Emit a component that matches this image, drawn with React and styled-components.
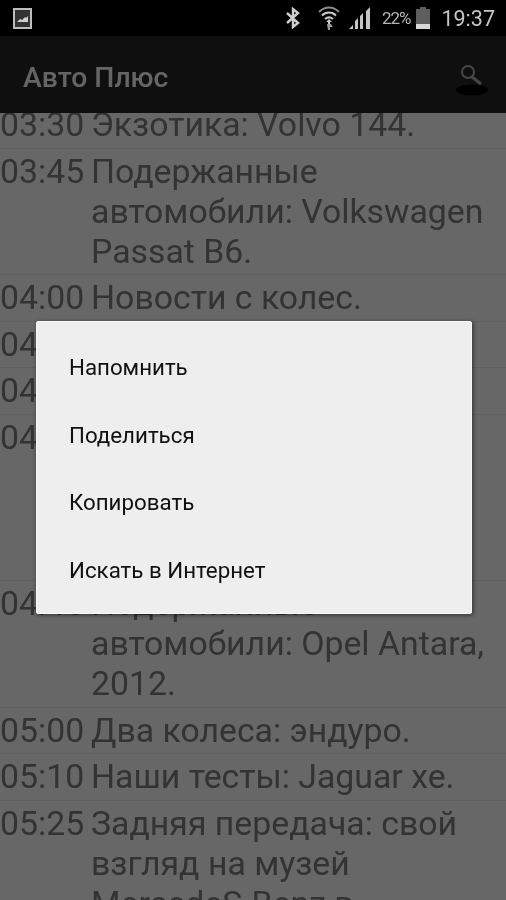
import React from "react";
import styled, { createGlobalStyle } from "styled-components";

const Global = createGlobalStyle`
  html, body { margin: 0; padding: 0; background: #000; }
  body { font-family: Roboto, "Noto Sans", sans-serif; }
`;

const Phone = styled.div`
  position: relative;
  width: 506px;
  height: 900px;
  overflow: hidden;
  display: flex;
  flex-direction: column;
  background: #f5f5f5;
  filter: blur(0.4px);
`;

const StatusBar = styled.div`
  flex: none;
  height: 36px;
  background: #000;
  color: #c8c8c8;
  display: flex;
  align-items: center;
  padding: 0 11px 0 13px;
  position: relative;
  z-index: 3;
`;

const StatusRight = styled.div`
  margin-left: auto;
  display: flex;
  align-items: center;
`;

const IconSlot = styled.span`
  display: flex;
  margin-left: ${(p) => p.$gap || 0}px;
`;

const Percent = styled.span`
  font-size: 17px;
  letter-spacing: -1px;
  margin: 0 5px 0 8px;
  color: #b4b4b4;
`;

const Clock = styled.span`
  font-size: 21.5px;
  margin-left: 10px;
  color: #c4c4c4;
`;

const AppBar = styled.div`
  flex: none;
  height: 77px;
  background: #242424;
  display: flex;
  align-items: center;
  justify-content: space-between;
  padding: 0 16px 0 23px;
`;

const Title = styled.h1`
  margin: 5px 0 0;
  font-size: 28.3px;
  font-weight: 500;
  color: #f0f0f0;
`;

const SearchSlot = styled.span`
  display: flex;
  margin-top: 11px;
`;

const List = styled.div`
  flex: 1;
  overflow: hidden;
`;

const Rows = styled.div`
  margin-top: -11px;
`;

const Row = styled.div`
  display: flex;
  padding: 3px 0 2.5px;
  border-bottom: 1px solid #e2e2e2;
  font-size: 33.8px;
  line-height: 40px;
  color: #7a7a7a;
`;

const Time = styled.div`
  flex: none;
  width: 91px;
`;

const Text = styled.div`
  flex: 1;
  padding-right: 14px;
`;

const Backdrop = styled.div`
  position: absolute;
  inset: 36px 0 0 0;
  background: rgba(0, 0, 0, 0.58);
  z-index: 1;
`;

const Dialog = styled.div`
  position: absolute;
  left: 36px;
  top: 321px;
  width: 436px;
  height: 293px;
  box-sizing: border-box;
  padding: 11px 0 9px;
  display: flex;
  flex-direction: column;
  background: #eeeeee;
  border: 1px solid #f8f8f8;
  border-radius: 2px;
  box-shadow: 1px 1px 4px rgba(0, 0, 0, 0.55);
  z-index: 2;
`;

const MenuItem = styled.div`
  flex: 1;
  display: flex;
  align-items: center;
  padding-left: 32px;
  font-size: 22.3px;
  color: #111;
`;

const programme = [
  ["03:30", "Экзотика: Volvo 144."],
  ["03:45", "Подержанные автомобили: Volkswagen Passat B6."],
  ["04:00", "Новости с колес."],
  ["04:10", "Наши тесты: Kia Rio."],
  ["04:20", "Два колеса: скутер."],
  ["04:30", "Задняя передача: свой взгляд на музей MercedeS-Benz в Германии."],
  ["04:45", "Подержанные автомобили: Opel Antara, 2012."],
  ["05:00", "Два колеса: эндуро."],
  ["05:10", "Наши тесты: Jaguar xe."],
  ["05:25", "Задняя передача: свой взгляд на музей MercedeS-Benz в Штутгарте."],
];

const menu = ["Напомнить", "Поделиться", "Копировать", "Искать в Интернет"];

const GalleryIcon = () => (
  <svg width="19" height="21" viewBox="0 0 19 21">
    <rect x="1" y="1" width="17" height="19" fill="#333" stroke="#bdbdbd" strokeWidth="2" />
    <path d="M4 14l3-3 2 1 3-3 1 1 2-2v6H4z" fill="#d0d0d0" />
  </svg>
);

const BluetoothIcon = () => (
  <svg width="16" height="22" viewBox="0 0 16 22">
    <path d="M2 6l11 10-5 4V2l5 4L2 16" fill="none" stroke="#cfcfcf" strokeWidth="2.4" />
  </svg>
);

const WifiIcon = () => (
  <svg width="24" height="26" viewBox="0 0 24 26">
    <path d="M2 7c6-6 14-6 20 0" fill="none" stroke="#8c8c8c" strokeWidth="2" />
    <path d="M5 10.500c4-4 10-4 14 0" fill="none" stroke="#c8c8c8" strokeWidth="2" />
    <path d="M8 14c2.500-2 5.500-2 8 0" fill="none" stroke="#c8c8c8" strokeWidth="2" />
    <path d="M12 14l3 3h-2v8h-2v-8H9z" fill="#c8c8c8" />
    <path d="M10 19l4 0 2 3h-3v3h-2z" fill="#9a9a9a" />
  </svg>
);

const SignalIcon = () => (
  <svg width="25" height="24" viewBox="0 0 25 24">
    <path d="M0 23l4-4v4zM6 23v-8l3-3v11zM11 23V10l3-3v16zM17 23V5l4-4v22z" fill="#c4c4c4" />
  </svg>
);

const BatteryIcon = () => (
  <svg width="16" height="24" viewBox="0 0 16 24">
    <path d="M5 1h6v2h4v20H1V3h4z" fill="#5e5e5e" />
    <rect x="1" y="18" width="14" height="5" fill="#d8d8d8" />
  </svg>
);

const SearchIcon = () => (
  <svg width="34" height="32" viewBox="0 0 34 32">
    <circle cx="12" cy="8" r="6" fill="none" stroke="#a8a8a8" strokeWidth="2" />
    <path d="M16 13l9 7" stroke="#a8a8a8" strokeWidth="3" />
    <ellipse cx="16" cy="26" rx="16" ry="5.5" fill="#000" />
  </svg>
);

export default function App() {
  return (
    <Phone>
      <Global />
      <StatusBar>
        <GalleryIcon />
        <StatusRight>
          <BluetoothIcon />
          <IconSlot $gap={16}>
            <WifiIcon />
          </IconSlot>
          <IconSlot $gap={8}>
            <SignalIcon />
          </IconSlot>
          <Percent>22%</Percent>
          <BatteryIcon />
          <Clock>19:37</Clock>
        </StatusRight>
      </StatusBar>
      <AppBar>
        <Title>Авто Плюс</Title>
        <SearchSlot>
          <SearchIcon />
        </SearchSlot>
      </AppBar>
      <List>
        <Rows>
          {programme.map(([time, text]) => (
            <Row key={time}>
              <Time>{time}</Time>
              <Text>{text}</Text>
            </Row>
          ))}
        </Rows>
      </List>
      <Backdrop />
      <Dialog>
        {menu.map((m) => (
          <MenuItem key={m}>{m}</MenuItem>
        ))}
      </Dialog>
    </Phone>
  );
}
